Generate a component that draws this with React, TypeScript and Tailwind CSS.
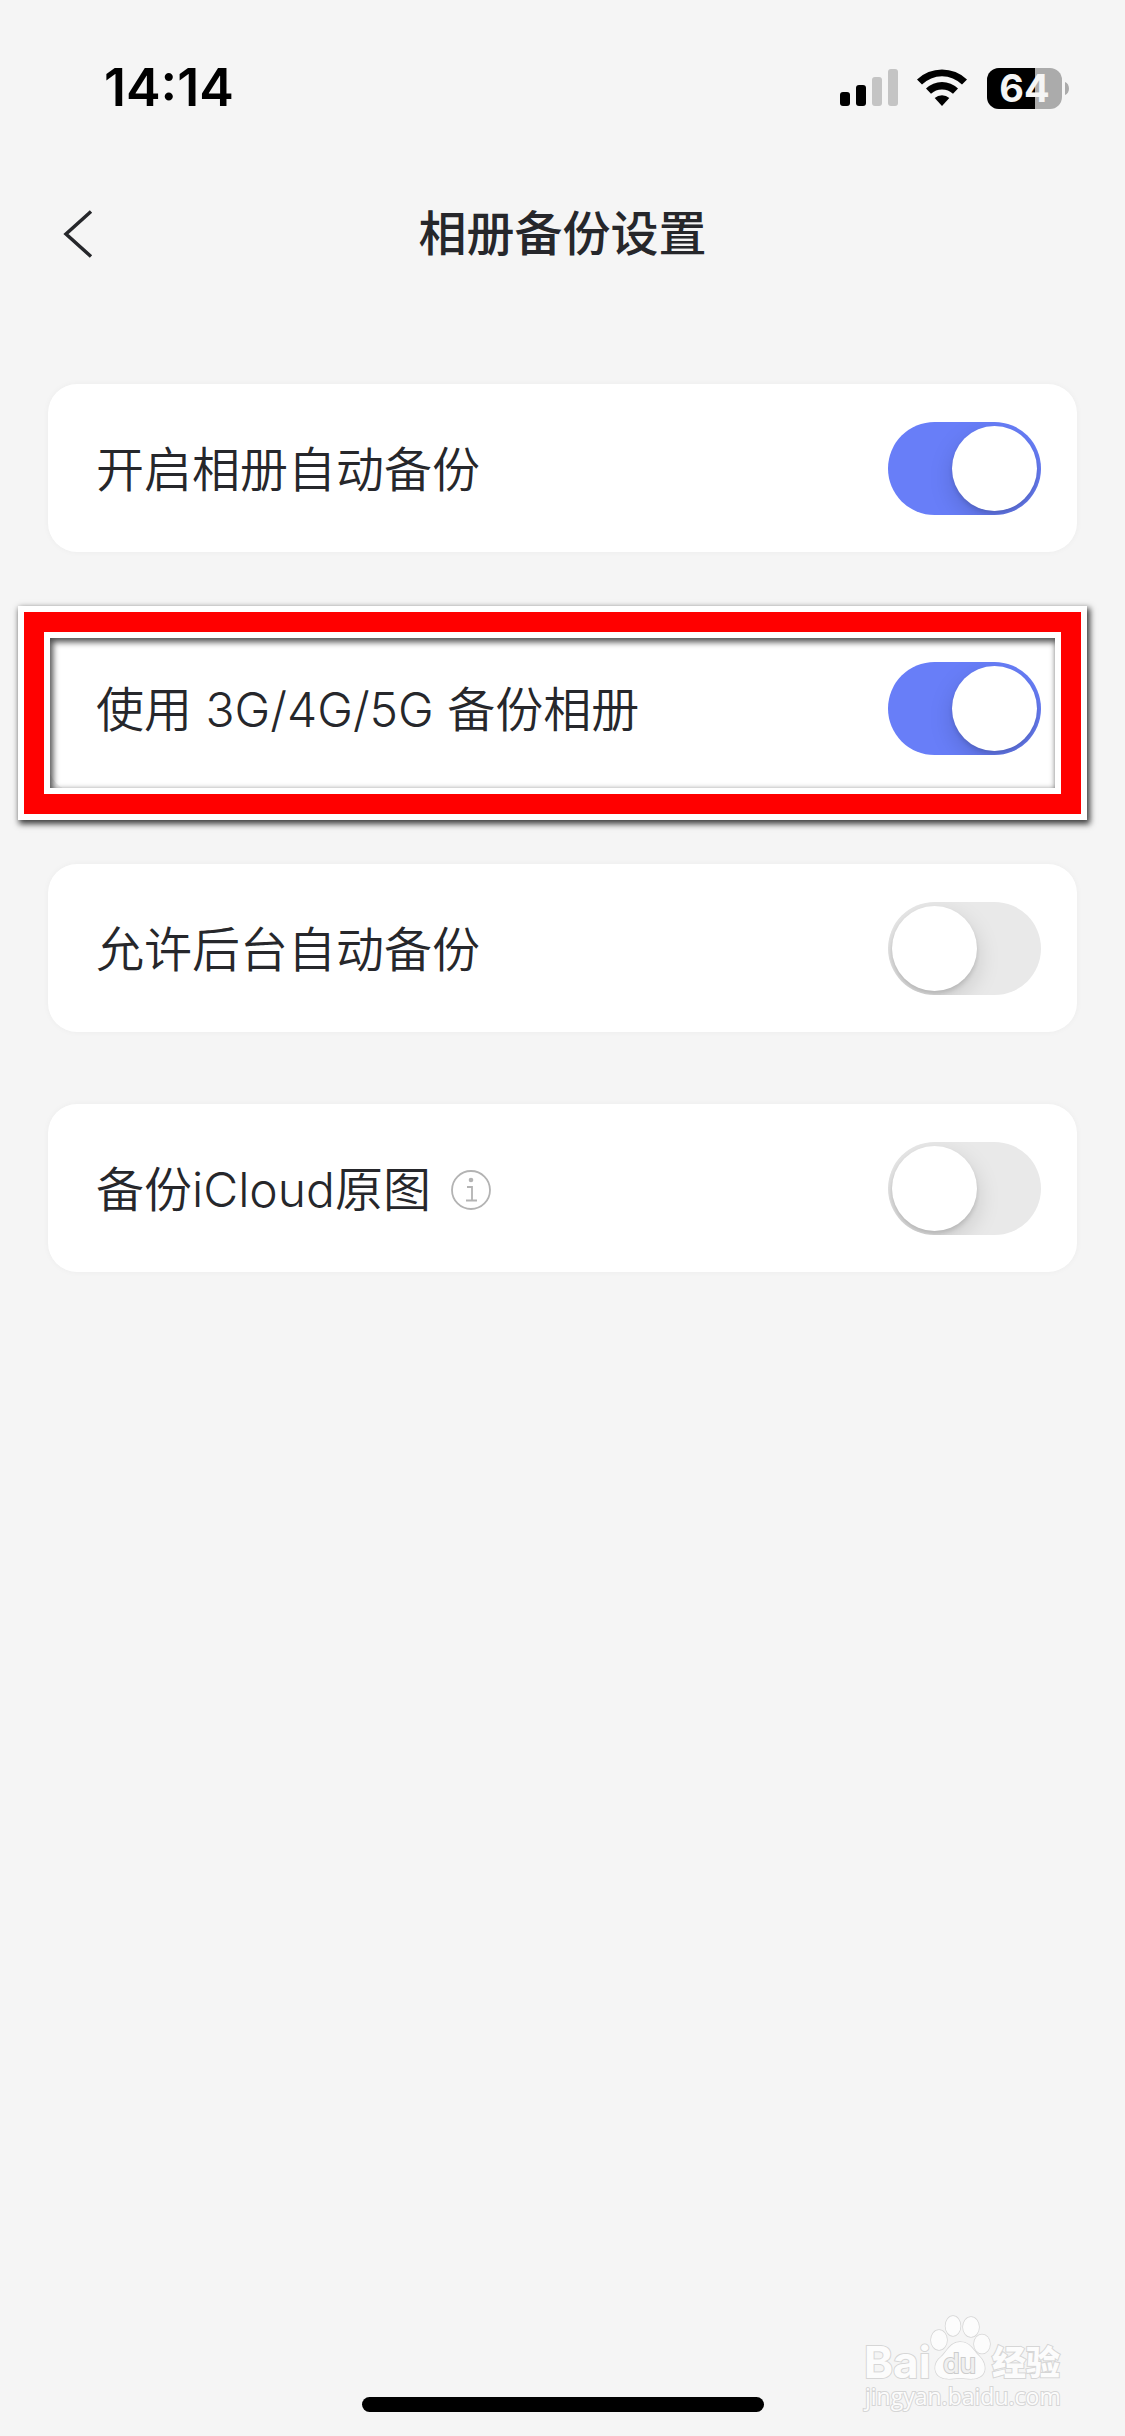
import { useState } from 'react'
import clsx from 'clsx'

interface Setting {
  id: string
  label: string
  enabled: boolean
  hasInfo?: boolean
  highlighted?: boolean
}

const initialSettings: Setting[] = [
  { id: 'auto', label: '开启相册自动备份', enabled: true },
  { id: 'cellular', label: '使用 3G/4G/5G 备份相册', enabled: true, highlighted: true },
  { id: 'background', label: '允许后台自动备份', enabled: false },
  { id: 'icloud', label: '备份iCloud原图', enabled: false, hasInfo: true },
]

function StatusBar() {
  return (
    <div className="flex h-44 items-center justify-between pr-14 pl-[104px] text-black">
      <span className="text-[52px] leading-none font-semibold">14:14</span>
      <div className="flex items-center">
        <svg className="mr-[19px] h-[38px] w-[58px]" viewBox="0 0 58 38">
          <rect x="0" y="23" width="10" height="14" rx="3" />
          <rect x="16" y="16" width="10" height="21" rx="3" />
          <rect x="32" y="8" width="10" height="29" rx="3" fill="#c4c4c4" />
          <rect x="48" y="0" width="10" height="37" rx="3" fill="#c4c4c4" />
        </svg>
        <svg className="mr-5 h-[38px] w-[50px]" viewBox="0 0 50 38">
          <path d="M0 10.500 A36 36 0 0 1 50 10.500 L45 15.500 A28.500 28.500 0 0 0 5 15.500 Z" />
          <path d="M9 19.500 A23 23 0 0 1 41 19.500 L36 24.800 A16 16 0 0 0 14 24.800 Z" />
          <path d="M17.700 29 A11 11 0 0 1 32.300 29 L25 37 Z" />
        </svg>
        <div className="relative flex h-[41px] w-[75px] items-center justify-center rounded-xl bg-[#ababab]">
          <div className="absolute inset-y-0 left-0 w-12 rounded-l-xl bg-black" />
          <span className="relative text-[38px] leading-none font-bold text-[#f5f5f5]">64</span>
        </div>
        <svg className="ml-[3px] h-[13px] w-1" viewBox="0 0 4 13">
          <path d="M0 0 C5.300 2 5.300 11 0 13 Z" fill="#ababab" />
        </svg>
      </div>
    </div>
  )
}

function InfoIcon() {
  return (
    <svg
      className="h-10 w-10"
      viewBox="0 0 40 40"
      fill="none"
      stroke="#b3b3b3"
      strokeWidth="1.800"
    >
      <circle cx="20" cy="20" r="19" />
      <circle cx="20" cy="10" r="2.300" fill="#b3b3b3" stroke="none" />
      <path d="M16 17 H21 V30 M15 30.500 H26" />
    </svg>
  )
}

function SettingCard({ setting, onToggle }: { setting: Setting; onToggle: () => void }) {
  return (
    <li className="relative flex h-[168px] items-center rounded-[29px] bg-white pr-9 pl-12 shadow-[0_0_6px_rgba(0,0,0,0.04)]">
      <div className="flex items-center gap-5 pt-1">
        <label htmlFor={setting.id} className="text-5xl leading-none font-[350]">
          {setting.label}
        </label>
        {setting.hasInfo && (
          <button type="button" aria-label="说明">
            <InfoIcon />
          </button>
        )}
      </div>
      <span className="relative ml-auto h-[93px] w-[153px] overflow-hidden rounded-full">
        <input
          id={setting.id}
          type="checkbox"
          role="switch"
          checked={setting.enabled}
          onChange={onToggle}
          className="peer block h-full w-full appearance-none bg-[#e9e9e9] checked:bg-[#687ef8]"
        />
        <span className="pointer-events-none absolute top-1 left-1 h-[85px] w-[85px] rounded-full bg-white shadow-[0_9px_24px_rgba(0,0,0,0.15),0_3px_4px_rgba(0,0,0,0.12)] peer-checked:left-16" />
      </span>
      {setting.highlighted && (
        <div className="pointer-events-none absolute -top-[18px] -right-[10px] -bottom-7 -left-[30px] border-[6px] border-white shadow-[2px_3px_6px_1px_rgba(0,0,0,0.75)]">
          <div className="h-full border-[20px] border-[#ff0000]">
            <div className="h-full border-[6px] border-white">
              <div className="h-full shadow-[inset_2px_3px_6px_1px_rgba(0,0,0,0.7)]" />
            </div>
          </div>
        </div>
      )}
    </li>
  )
}

function Watermark() {
  return (
    <svg
      className="absolute right-[56px] bottom-6 h-[100px] w-[208px]"
      viewBox="0 0 208 100"
      fill="#fcfcfc"
      stroke="#d6d6d6"
      strokeWidth="1.500"
      paintOrder="stroke"
    >
      <g strokeWidth="2">
        <text x="3" y="66" fontFamily="Inter, sans-serif" fontSize="44" fontWeight="700">
          Bai
        </text>
        <text x="131" y="63" fontFamily="'Noto Sans CJK SC', sans-serif" fontSize="34" fontWeight="900">
          经验
        </text>
        <text x="4" y="93" fontFamily="'Open Sans', sans-serif" fontSize="23">
          jingyan.baidu.com
        </text>
      </g>
      <ellipse cx="78" cy="28" rx="8" ry="10" />
      <ellipse cx="92" cy="14" rx="7.500" ry="10" />
      <ellipse cx="110" cy="15" rx="8" ry="10" />
      <ellipse cx="121" cy="32" rx="8" ry="9.500" />
      <path d="M99 30 C109 30 112 38 118 44 C126 52 126 63 116 66 C109 68 106 66 99 66 C92 66 89 68 82 66 C72 63 72 51 80 45 C86 40 89 30 99 30 Z" />
      <text
        x="82"
        y="61"
        fontFamily="Inter, sans-serif"
        fontSize="27"
        fontWeight="500"
        fill="#f0f0f0"
        stroke="#cccccc"
        strokeWidth="2"
      >
        du
      </text>
    </svg>
  )
}

export default function App() {
  const [settings, setSettings] = useState(initialSettings)

  const toggle = (id: string) => {
    setSettings((prev) => prev.map((s) => (s.id === id ? { ...s, enabled: !s.enabled } : s)))
  }

  return (
    <div
      className={clsx(
        'relative flex min-h-screen flex-col bg-[#f5f5f5] text-[#26272b]',
        "font-[Inter,'Noto_Sans_CJK_SC',sans-serif]",
      )}
    >
      <StatusBar />

      <header className="grid h-[116px] grid-cols-[1fr_auto_1fr] items-center px-[60px]">
        <button type="button" aria-label="返回" className="justify-self-start">
          <svg
            className="h-12 w-9"
            viewBox="0 0 36 48"
            fill="none"
            stroke="currentColor"
            strokeWidth="3.500"
          >
            <path d="M31 1.500 L6 24 L31 46.500" />
          </svg>
        </button>
        <h1 className="text-5xl leading-none font-medium">相册备份设置</h1>
      </header>

      <main className="flex-1 px-12 pt-[92px]">
        <ul className="flex flex-col gap-[72px]">
          {settings.map((setting) => (
            <SettingCard key={setting.id} setting={setting} onToggle={() => toggle(setting.id)} />
          ))}
        </ul>
      </main>

      <footer className="flex justify-center pb-6">
        <div className="h-[15px] w-[402px] rounded-full bg-black" />
      </footer>
      <Watermark />
    </div>
  )
}
